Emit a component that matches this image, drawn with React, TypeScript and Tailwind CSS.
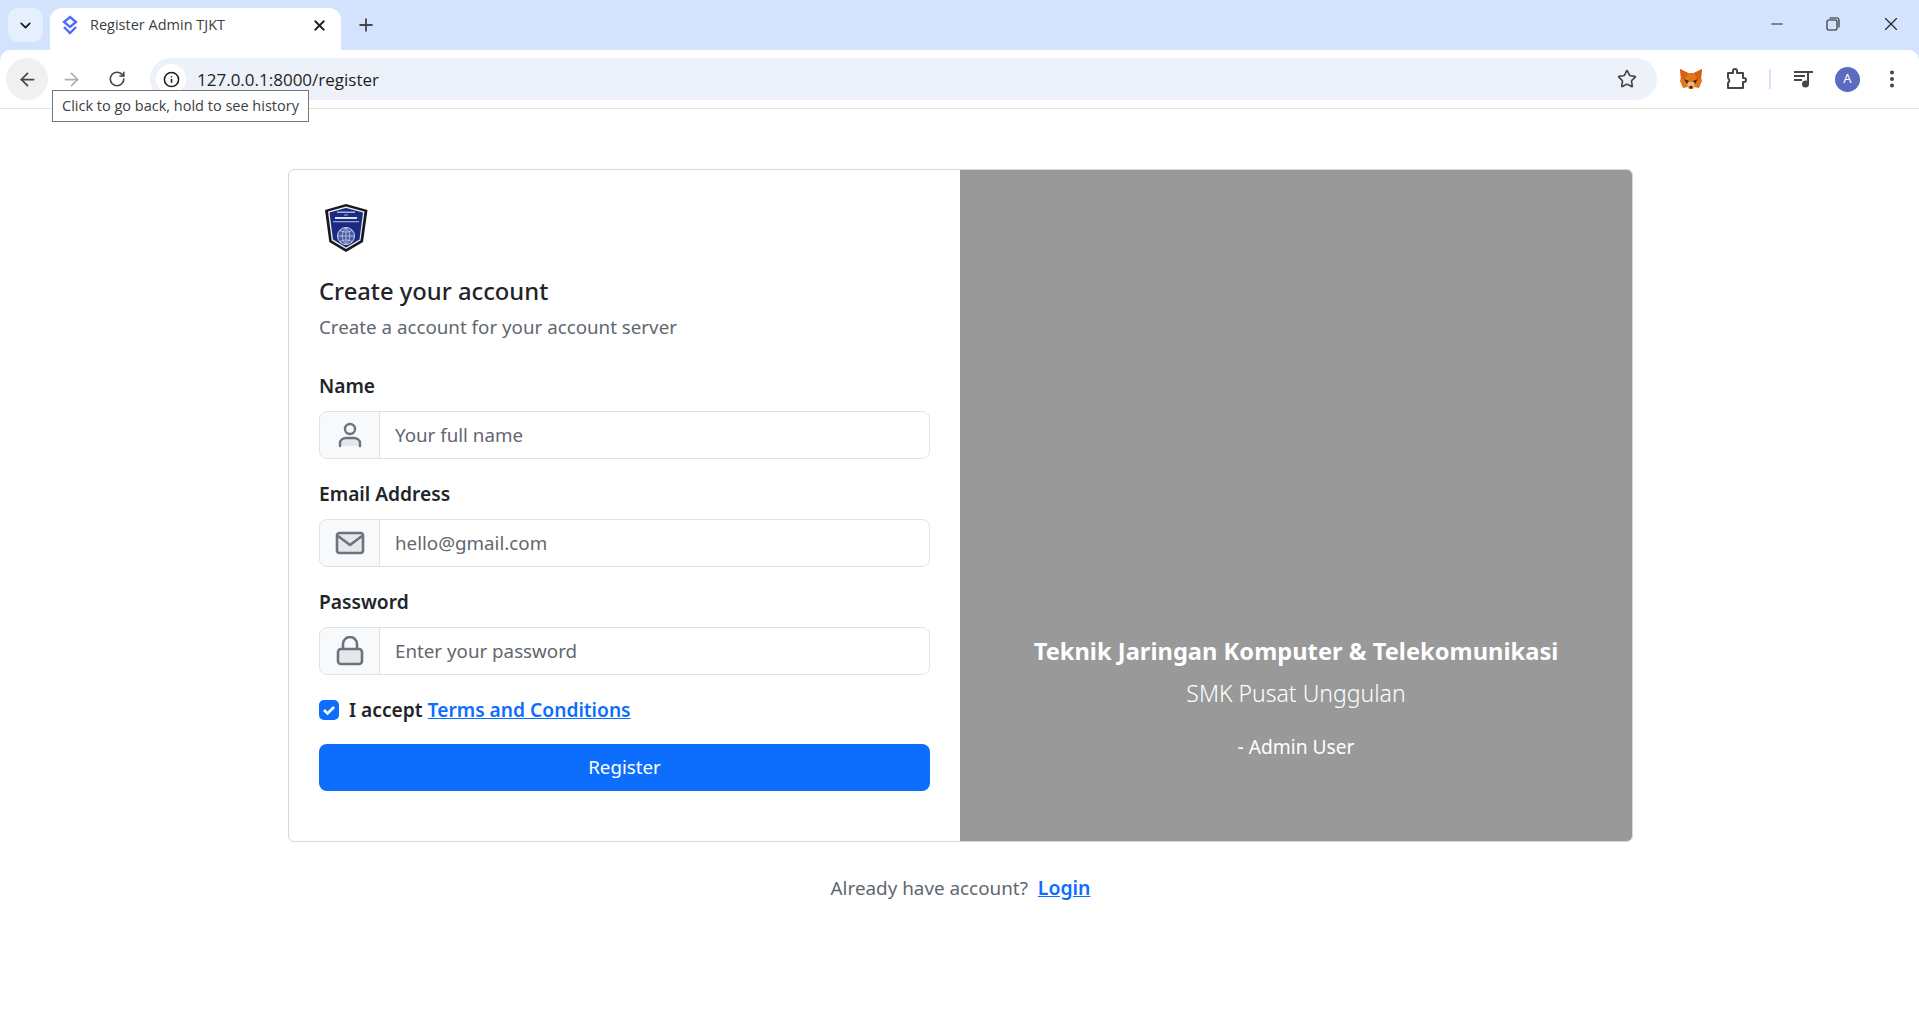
import React from 'react';
import { ArrowLeft, ArrowRight, ChevronDown, EllipsisVertical, Info, Minus, Plus, RotateCw, Star, X } from 'lucide-react';

const Fox = () => (
  <svg width="22" height="22" viewBox="0 0 22 22">
    <path d="M0 1l8 4h6l8-4-1 8 1 4-3 7-5-1-1 2H9l-1-2-5 1-3-7 1-4z" fill="#e2761b" />
    <path d="M0 1l8 4-3 6H1z" fill="#d5600d" />
    <path d="M22 1l-8 4 3 6h4z" fill="#d5600d" />
    <path d="M4 11l5 2-2 3zM18 11l-5 2 2 3z" fill="#3f2a1c" />
    <path d="M8 14h6l1 4-4 2-4-2z" fill="#f3b078" />
    <path d="M9.500 18h3l-.5 2.500h-2z" fill="#2b2019" />
  </svg>
);

const Shield = () => (
  <svg width="43" height="49" viewBox="0 0 43 49">
    <path d="M21 0L0 6l4.300 32L21 48l17-10 4.500-32z" fill="#17171f" />
    <path d="M21 2.500L3 7.500l3.700 29L21 45l14.500-8.500 4-29z" fill="#e9e9ee" />
    <path d="M21 4L4.500 8.500l3.500 27L21 43.500l13.500-8 3.500-27z" fill="#1a2a80" />
    <rect x="12" y="7.500" width="18" height="1.500" fill="#aab2da" />
    <rect x="19" y="10.500" width="4" height="1" fill="#aab2da" />
    <rect x="10" y="13" width="22" height="2" fill="#dfe2f2" />
    <rect x="8" y="17" width="26" height="1.300" fill="#99a3d2" />
    <circle cx="21" cy="32" r="8.500" fill="#4a5aa6" stroke="#d4d8ec" strokeWidth="1" />
    <path d="M12.500 32h17M21 23.500v17M15 26.500c4 2 8 2 12 0M15 37.500c4-2 8-2 12 0M21 23.500c-5 5-5 12 0 17M21 23.500c5 5 5 12 0 17" stroke="#d4d8ec" strokeWidth=".7" fill="none" />
  </svg>
);

const UserGlyph = () => (
  <svg width="24" height="26" viewBox="0 0 24 26" fill="#e5e7eb" stroke="#6b7280" strokeWidth="2.400" strokeLinecap="round">
    <circle cx="12" cy="7" r="5" fill="none" />
    <path d="M2 24v-3c0-3 3-5 6-5h8c3 0 6 2 6 5v3" />
  </svg>
);

const MailGlyph = () => (
  <svg width="30" height="26" viewBox="0 0 30 26" fill="#e5e7eb" stroke="#6b7280" strokeWidth="2.600" strokeLinejoin="round">
    <rect x="2" y="3" width="26" height="20" rx="2.500" />
    <path d="M3 6l12 9 12-9" fill="none" />
  </svg>
);

const LockGlyph = () => (
  <svg width="28" height="30" viewBox="0 0 28 30" fill="#e5e7eb" stroke="#6b7280" strokeWidth="2.600">
    <path d="M7 13V8a7 7 0 0 1 14 0v5" fill="none" />
    <rect x="2" y="13" width="24" height="15" rx="3" />
  </svg>
);

const Field = ({ label, placeholder, icon }: { label: string; placeholder: string; icon: React.ReactNode }) => (
  <div className="mb-[21px]">
    <div className="mb-[11px] text-[19.2px] leading-[28px] font-semibold text-[#212529]">{label}</div>
    <div className="flex h-[48px] rounded-[8px] border border-[#dee2e6] overflow-hidden">
      <div className="flex w-[60px] items-center justify-center border-r border-[#dee2e6] bg-[#f8f9fa]">{icon}</div>
      <div className="flex-1 px-[15px] text-[18.75px] leading-[46px] text-[#5f6770]">{placeholder}</div>
    </div>
  </div>
);

export default function App() {
  return (
    <div className="relative min-h-[1018px] bg-white font-['Noto_Sans',sans-serif]">
      <div className="bg-[#d3e3fd]">
        <div className="flex h-[50px] items-end pl-[8px]">
          <div className="mb-[8px] flex h-[34px] w-[35px] items-center justify-center rounded-[10px] bg-[#e6effd]">
            <ChevronDown size={17} strokeWidth={2.600} className="text-[#1f1f1f]" />
          </div>
          <div className="relative ml-[7px] flex h-[42px] w-[291px] items-center rounded-t-[12px] bg-white pb-[8px] pl-[11px] pr-[13px]">
            <svg width="18" height="20" viewBox="0 0 18 20" fill="none" stroke="#4f6ef7" strokeWidth="2.400">
              <path d="M9 2l6 5-6 5-6-5z" />
              <path d="M3 12l6 6 6-6" />
            </svg>
            <span className="ml-[11px] flex-1 font-['Open_Sans',sans-serif] text-[14.500px] text-[#3c4043]">Register Admin TJKT</span>
            <X size={17} strokeWidth={2.600} className="text-[#1f1f1f]" />
          </div>
          <Plus size={20} strokeWidth={2.200} className="mb-[15px] ml-[15px] text-[#444746]" />
          <div className="ml-auto mb-[15px] flex items-center gap-[40px] pr-[17px] text-[#1f1f1f]">
            <Minus size={18} strokeWidth={1.300} />
            <svg width="14" height="14" viewBox="0 0 14 14" fill="none" stroke="#1f1f1f" strokeWidth="1.100">
              <rect x="1" y="3" width="10" height="10" rx="1.500" />
              <path d="M3.500 1h8a2 2 0 0 1 1.500 1.500v8" />
            </svg>
            <X size={22} strokeWidth={1.200} />
          </div>
        </div>
        <div className="flex h-[59px] items-center rounded-t-[10px] border-b border-[#e3e3e3] bg-white pl-[6px] pr-[14px]">
          <div className="flex h-[42px] w-[42px] items-center justify-center rounded-full bg-[#f0f0f0]">
            <ArrowLeft size={21} strokeWidth={2} className="text-[#474747]" />
          </div>
          <ArrowRight size={21} strokeWidth={2} className="ml-[13px] text-[#b0b0b0]" />
          <RotateCw size={18} strokeWidth={2.200} className="ml-[26px] text-[#474747]" />
          <div className="ml-[24px] flex h-[42px] w-[1507px] items-center rounded-full bg-[#edf2fa] pl-[6px] pr-[20px]">
            <div className="flex h-[30px] w-[30px] items-center justify-center rounded-full bg-white">
              <Info size={17} strokeWidth={2.200} className="text-[#1f1f1f]" />
            </div>
            <span className="ml-[11px] flex-1 pt-[2px] font-['Open_Sans',sans-serif] text-[17px] text-[#1f1f1f]">127.0.0.1:8000/register</span>
            <Star size={20} strokeWidth={2} className="text-[#474747]" />
          </div>
          <div className="ml-[23px]"><Fox /></div>
          <svg className="ml-[24px]" width="22" height="22" viewBox="0 0 22 22" fill="none" stroke="#474747" strokeWidth="2" strokeLinejoin="round">
            <path d="M2 5h5V3a2 2 0 0 1 4 0v2h6v5h1a2 2 0 0 1 0 4h-1v6H2v-5a3 3 0 0 0 0-5z" />
          </svg>
          <div className="ml-[21px] h-[20px] w-[2px] bg-[#d3e3fd]" />
          <svg className="ml-[22px]" width="22" height="20" viewBox="0 0 22 20" fill="none" stroke="#474747" strokeWidth="2">
            <path d="M1 3h13M1 7h11M1 11h8" />
            <path d="M15 15V3h5" />
            <circle cx="12.500" cy="15" r="2.500" fill="#474747" />
          </svg>
          <div className="ml-[20px] flex h-[25px] w-[25px] items-center justify-center rounded-full bg-[#5c6bc0] text-[13px] text-white">A</div>
          <EllipsisVertical size={22} strokeWidth={2.400} className="ml-[21px] text-[#474747]" />
        </div>
      </div>

      <div className="absolute left-[52px] top-[90px] border border-[#767676] bg-white px-[9px] py-[3px] font-['Open_Sans',sans-serif] text-[14.500px] leading-[24px] whitespace-nowrap text-[#3c4043]">
        Click to go back, hold to see history
      </div>

      <main className="flex flex-col items-center pl-[2px] pt-[60px]">
        <div className="flex h-[673px] w-[1345px] overflow-hidden rounded-[6px] border border-[#d6d6d6]">
          <div className="w-[671px] px-[30px] pt-[34px]">
            <div className="ml-[6px]"><Shield /></div>
            <h1 className="mt-[21px] text-[23.750px] leading-[34px] font-medium text-[#212529]">Create your account</h1>
            <p className="mt-[6px] mb-[32px] text-[18.750px] leading-[26px] text-[#5f6770]">Create a account for your account server</p>
            <Field label="Name" placeholder="Your full name" icon={<UserGlyph />} />
            <Field label="Email Address" placeholder="hello@gmail.com" icon={<MailGlyph />} />
            <Field label="Password" placeholder="Enter your password" icon={<LockGlyph />} />
            <div className="mt-[21px] flex items-center">
              <div className="flex h-[20px] w-[20px] items-center justify-center rounded-[5px] bg-[#0d6efd]">
                <svg width="14" height="14" viewBox="0 0 14 14" fill="none" stroke="white" strokeWidth="2.600"><path d="M2 7l3.500 3.500L12 4" /></svg>
              </div>
              <span className="ml-[10px] text-[19.2px] leading-[28px] font-semibold text-[#212529]">
                I accept <a className="text-[#0d6efd] underline">Terms and Conditions</a>
              </span>
            </div>
            <button className="mt-[20px] h-[47px] w-full rounded-[8px] bg-[#0d6efd] text-[18.750px] text-white">Register</button>
          </div>
          <div className="flex flex-1 flex-col items-center bg-[#999999] pt-[463px] text-white">
            <div className="text-[23.700px] leading-[36px] font-bold">Teknik Jaringan Komputer &amp; Telekomunikasi</div>
            <div className="mt-[6px] text-[23px] leading-[36px] font-light">SMK Pusat Unggulan</div>
            <div className="mt-[22px] text-[19.200px] leading-[28px]">- Admin User</div>
          </div>
        </div>
        <div className="mt-[32px] text-[18.850px] leading-[28px] text-[#5f6770]">
          Already have account?<a className="ml-[10px] text-[19.400px] font-semibold text-[#0d6efd] underline">Login</a>
        </div>
      </main>
    </div>
  );
}
